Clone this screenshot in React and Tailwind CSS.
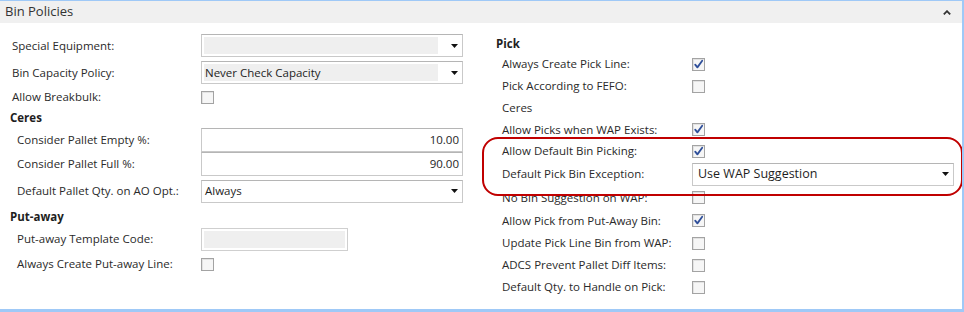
import React from 'react';

const FONT = { fontFamily: '"Open Sans", "Noto Sans", sans-serif' };

function Checkbox({ checked }) {
  return (
    <div className="w-[13px] h-[13px] border border-[#a3a3a3] bg-[#f6f6f6] shadow-[inset_1px_1px_0_#e2e2e2] flex items-center justify-center">
      {checked && (
        <svg width="11" height="11" viewBox="0 0 11 11">
          <path d="M2.2 5.6 L4.4 8.4 L9.2 1.8" fill="none" stroke="#2f4f9a" strokeWidth="1.8" strokeLinecap="round" strokeLinejoin="round" />
        </svg>
      )}
    </div>
  );
}

function Arrow() {
  return (
    <svg width="7" height="4" viewBox="0 0 7 4" className="shrink-0">
      <path d="M0 0 H7 L3.5 4 Z" fill="#111" />
    </svg>
  );
}

// dropdown: filled = gray inner field (read-only look)
function Dropdown({ value, filled, big }) {
  return (
    <div className="w-[262px] h-[23px] border border-[#c9c9c9] border-t-[#b5b5b5] bg-white flex items-center pl-[2px] pr-[4px]">
      <div
        className={`flex-1 h-[17px] flex items-center px-[1px] ${filled ? 'bg-[#efefef] mr-[13px]' : 'mr-[8px]'} ${big ? 'text-[12.5px] pl-[3px]' : 'text-[11.5px]'} text-[#1e1e1e]`}
      >
        {value}
      </div>
      <Arrow />
    </div>
  );
}

function NumberBox({ value }) {
  return (
    <div className="w-[262px] h-[24px] border border-[#c9c9c9] border-t-[#b5b5b5] bg-white flex items-center justify-end pr-[3px] text-[11.5px] text-[#1e1e1e]">
      {value}
    </div>
  );
}

function Row({ label, h, indent = 'pl-[12px]', labelW = 'w-[201px]', children }) {
  return (
    <div className={`flex items-center ${h}`}>
      <div className={`${labelW} ${indent} shrink-0 text-[11.5px] text-[#2a2a2a] whitespace-nowrap`}>{label}</div>
      {children}
    </div>
  );
}

function Heading({ children, h, className = '' }) {
  return <div className={`flex items-center ${h} ${className} text-[11.5px] font-bold text-[#1e1e1e]`}>{children}</div>;
}

export default function App() {
  const right = [
    { label: 'Always Create Pick Line:', h: 'h-[22px]', checked: true },
    { label: 'Pick According to FEFO:', h: 'h-[22px]', checked: false },
    { label: 'Ceres', h: 'h-[22px]', plain: true },
    { label: 'Allow Picks when WAP Exists:', h: 'h-[21px]', checked: true },
    { label: 'Allow Default Bin Picking:', h: 'h-[22px]', checked: true },
    { label: 'Default Pick Bin Exception:', h: 'h-[24px]', dropdown: 'Use WAP Suggestion' },
    { label: 'No Bin Suggestion on WAP:', h: 'h-[23px]', checked: false },
    { label: 'Allow Pick from Put-Away Bin:', h: 'h-[23px]', checked: true },
    { label: 'Update Pick Line Bin from WAP:', h: 'h-[22px]', checked: false },
    { label: 'ADCS Prevent Pallet Diff Items:', h: 'h-[22px]', checked: false },
    { label: 'Default Qty. to Handle on Pick:', h: 'h-[22px]', checked: false },
  ];

  return (
    <div style={FONT} className="relative w-[964px] h-[312px] bg-white border-t border-r-2 border-b-[3px] border-[#9fc9f7] overflow-hidden">
      {/* header bar */}
      <div className="h-[22px] bg-[#f0f0f0] flex items-center justify-between pl-[5px] pr-[11px]">
        <span className="text-[13px] text-[#333]">Bin Policies</span>
        <svg width="8" height="5" viewBox="0 0 8 5">
          <path d="M0.8 4.4 L4 1.2 L7.2 4.4" fill="none" stroke="#333" strokeWidth="1.8" />
        </svg>
      </div>

      <div className="flex">
        {/* left column */}
        <div className="w-[490px] pt-[9px]">
          <Row label="Special Equipment:" h="h-[27px]">
            <Dropdown filled value="" />
          </Row>
          <Row label="Bin Capacity Policy:" h="h-[27px]">
            <Dropdown filled value="Never Check Capacity" />
          </Row>
          <Row label="Allow Breakbulk:" h="h-[22px]">
            <Checkbox />
          </Row>
          <Heading h="h-[20px]" className="pl-[10px]">Ceres</Heading>
          <Row label="Consider Pallet Empty %:" h="h-[24px]" indent="pl-[17px]">
            <NumberBox value="10.00" />
          </Row>
          <Row label="Consider Pallet Full %:" h="h-[24px]" indent="pl-[17px]">
            <NumberBox value="90.00" />
          </Row>
          <Row label="Default Pallet Qty. on AO Opt.:" h="h-[30px]" indent="pl-[17px]">
            <Dropdown value="Always" />
          </Row>
          <Heading h="h-[22px]" className="pl-[10px]">Put-away</Heading>
          <Row label="Put-away Template Code:" h="h-[22px]" indent="pl-[17px]">
            <div className="w-[147px] h-[23px] border border-[#cfcfcf] bg-white flex items-center px-[2px]">
              <div className="w-full h-[17px] bg-[#efefef]"></div>
            </div>
          </Row>
          <Row label="Always Create Put-away Line:" h="h-[28px]" indent="pl-[17px]">
            <Checkbox />
          </Row>
        </div>

        {/* right column */}
        <div className="flex-1 pt-[12px]">
          <Heading h="h-[18px]" className="pl-[6px]">Pick</Heading>
          {right.map((r) =>
            r.plain ? (
              <div key={r.label} className={`flex items-center ${r.h} pl-[12px] text-[11.5px] text-[#2a2a2a]`}>
                {r.label}
              </div>
            ) : (
              <Row key={r.label} label={r.label} h={r.h} labelW="w-[202px]">
                {r.dropdown ? <Dropdown value={r.dropdown} big /> : <Checkbox checked={r.checked} />}
              </Row>
            )
          )}
        </div>
      </div>

      {/* red highlight around two rows */}
      <div className="absolute left-[482px] top-[136px] w-[481px] h-[59px] border-2 border-[#c00000] rounded-[16px] pointer-events-none"></div>
    </div>
  );
}
